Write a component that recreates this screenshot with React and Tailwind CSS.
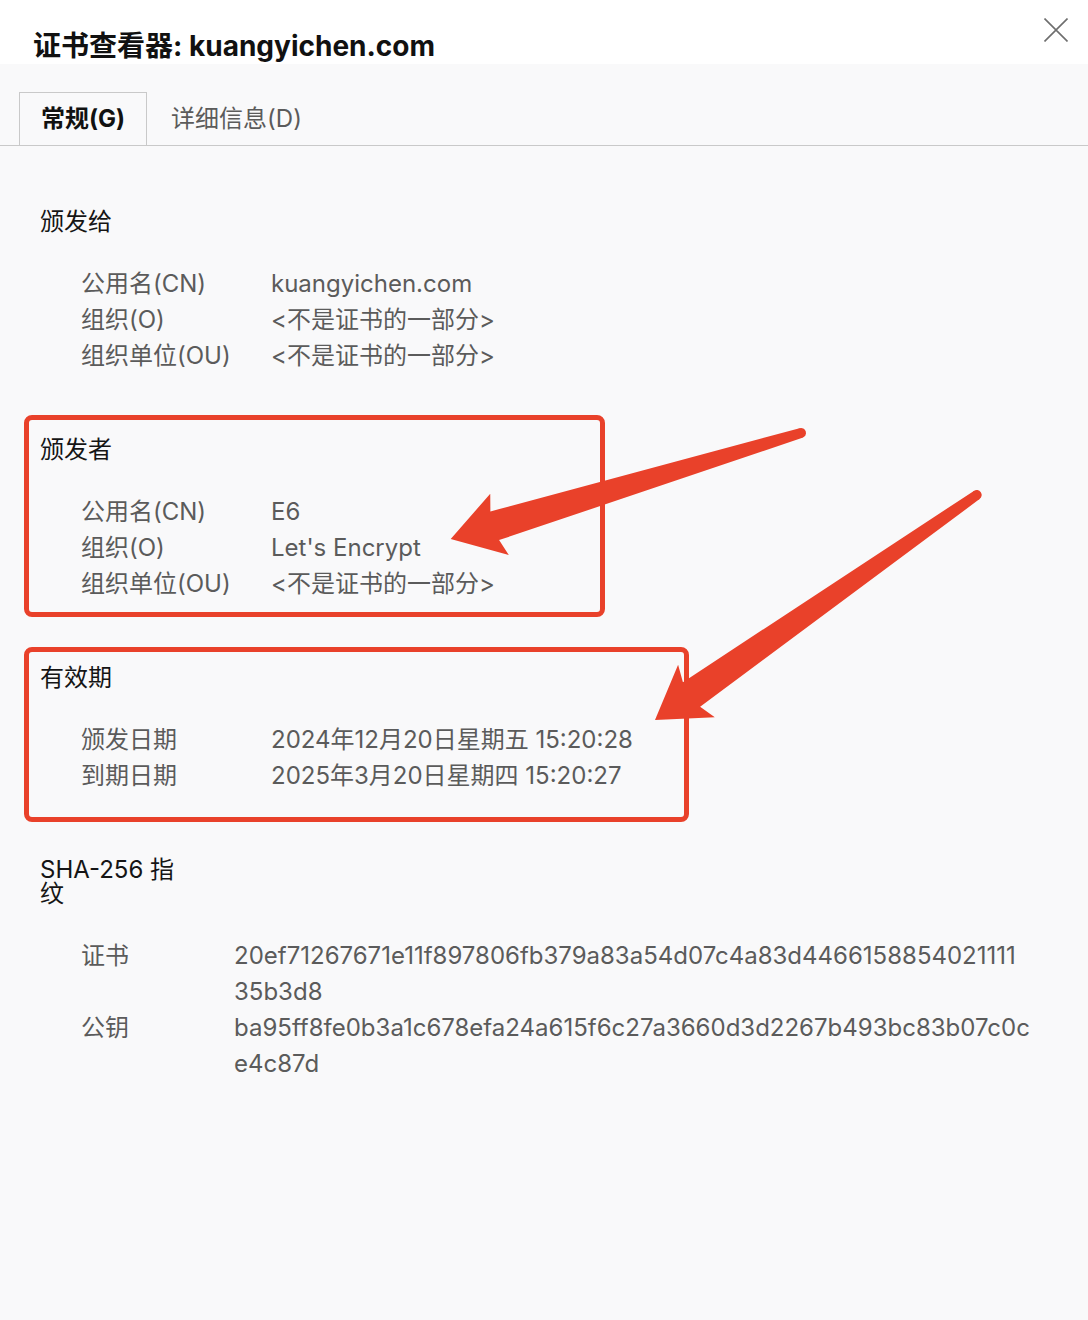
import React from 'react';

const FONT = { fontFamily: 'Inter, "Noto Sans CJK SC", sans-serif' };

const sections = [
  {
    title: '颁发给',
    labelWidth: 'w-[190px]',
    rows: [
      ['公用名(CN)', ['kuangyichen.com']],
      ['组织(O)', ['<不是证书的一部分>']],
      ['组织单位(OU)', ['<不是证书的一部分>']],
    ],
  },
  {
    title: '颁发者',
    labelWidth: 'w-[190px]',
    rows: [
      ['公用名(CN)', ['E6']],
      ['组织(O)', ["Let's Encrypt"]],
      ['组织单位(OU)', ['<不是证书的一部分>']],
    ],
  },
  {
    title: '有效期',
    labelWidth: 'w-[190px]',
    rows: [
      ['颁发日期', ['2024年12月20日星期五 15:20:28']],
      ['到期日期', ['2025年3月20日星期四 15:20:27']],
    ],
  },
  {
    title: 'SHA-256 指纹',
    narrow: true,
    labelWidth: 'w-[153px]',
    rows: [
      ['证书', ['20ef71267671e11f897806fb379a83a54d07c4a83d4466158854021111', '35b3d8']],
      ['公钥', ['ba95ff8fe0b3a1c678efa24a615f6c27a3660d3d2267b493bc83b07c0c', 'e4c87d']],
    ],
  },
];

// red annotation arrow: tail at (x,y), rotated toward the tip
const Arrow = ({ x, y, angle, len, barb, join }) => (
  <g transform={`translate(${x} ${y}) rotate(${angle})`}>
    <circle cx="0" cy="0" r="5" />
    <polygon points={`0,-5 ${join},-15 ${barb},-32 ${len},0 ${barb},32 ${join},15 0,5`} />
  </g>
);

const Section = ({ section }) => (
  <div className="flex flex-col">
    <div className={`text-[24px] leading-6 text-[#151515] ${section.narrow ? 'w-[142px]' : ''}`}>
      {section.title}
    </div>
    <div className="mt-8 pl-[41px] flex flex-col">
      {section.rows.map(([label, lines]) => (
        <div key={label} className="flex text-[24px] leading-9 text-[#5b5b5b]">
          <div className={`${section.labelWidth} shrink-0`}>{label}</div>
          <div className="flex flex-col">
            {lines.map((l) => (
              <div key={l} className="whitespace-nowrap">{l}</div>
            ))}
          </div>
        </div>
      ))}
    </div>
  </div>
);

export default function App() {
  return (
    <div className="relative w-[1088px] h-[1320px] bg-[#f9f9fa] overflow-hidden" style={FONT}>
      {/* header */}
      <div className="h-16 bg-white flex justify-between">
        <h1 className="pl-[33px] pt-[30px] text-[28px] leading-8 font-bold text-[#111]">
          证书查看器: kuangyichen.com
        </h1>
        <button className="mr-[20px] mt-[18px] w-6 h-6 self-start">
          <svg width="24" height="24" viewBox="0 0 24 24" stroke="#6e6e6e" strokeWidth="1.6" fill="none">
            <path d="M0.5 0.5 L23.5 23.5 M23.5 0.5 L0.5 23.5" />
          </svg>
        </button>
      </div>

      {/* tabs */}
      <div className="mt-7 flex border-b border-[#c9c9c9] pl-[19px]">
        <div className="-mb-px border border-b-0 border-[#c9c9c9] bg-[#f9f9fa] px-[21px] h-[53px] flex items-center text-[24px] font-bold text-[#111]">
          常规(G)
        </div>
        <div className="px-6 h-[53px] flex items-center text-[24px] text-[#5b5b5b]">详细信息(D)</div>
      </div>

      {/* content */}
      <div className="px-10 pt-16 flex flex-col gap-16">
        {sections.map((s) => (
          <Section key={s.title} section={s} />
        ))}
      </div>

      {/* annotations */}
      <div className="absolute left-[24px] top-[415px] w-[581px] h-[202px] border-[5px] border-[#e9412a] rounded-lg" />
      <div className="absolute left-[24px] top-[647px] w-[665px] h-[175px] border-[5px] border-[#e9412a] rounded-lg" />
      <svg className="absolute inset-0 pointer-events-none" width="1088" height="1320" fill="#e9412a">
        <Arrow x={801} y={433} angle={163.15} len={366} barb={315} join={320} />
        <Arrow x={976.7} y={495} angle={145.03} len={392.6} barb={342} join={348} />
      </svg>
    </div>
  );
}
